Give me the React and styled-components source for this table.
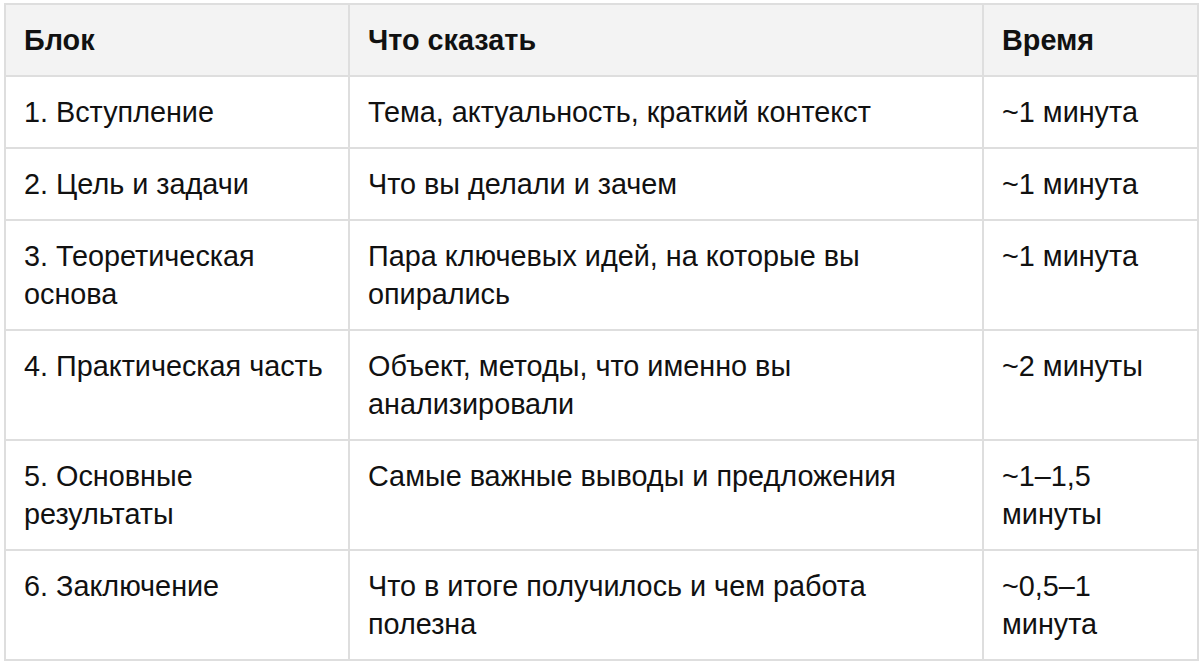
import React from 'react';
import styled, { createGlobalStyle } from 'styled-components';

const GlobalStyle = createGlobalStyle`
    body {
        margin: 0;
        background: #ffffff;
        font-family: "Liberation Sans", Arial, sans-serif;
    }
`;

const Page = styled.div`
    padding: 3px 3px 0 4px;
`;

const Table = styled.table`
    width: 1193px;
    border-collapse: collapse;
    table-layout: fixed;
    color: #111111;
    font-size: 28.8px;
    line-height: 38px;
`;

const Th = styled.th`
    background: #f3f3f3;
    border: 2px solid #dedede;
    padding: 16px 18px;
    text-align: left;
    vertical-align: top;
    font-weight: 700;
`;

const Td = styled.td`
    border: 2px solid #dedede;
    padding: 16px 18px;
    vertical-align: top;
    font-weight: 400;
`;

const rows = [
    ['1. Вступление', 'Тема, актуальность, краткий контекст', '~1 минута'],
    ['2. Цель и задачи', 'Что вы делали и зачем', '~1 минута'],
    ['3. Теоретическая основа', 'Пара ключевых идей, на которые вы опирались', '~1 минута'],
    ['4. Практическая часть', 'Объект, методы, что именно вы анализировали', '~2 минуты'],
    ['5. Основные результаты', 'Самые важные выводы и предложения', '~1–1,5 минуты'],
    ['6. Заключение', 'Что в итоге получилось и чем работа полезна', '~0,5–1 минута'],
];

function App() {
    return (
        <Page>
            <GlobalStyle />
            <Table>
                <colgroup>
                    <col style={{ width: 344 }} />
                    <col style={{ width: 634 }} />
                    <col style={{ width: 215 }} />
                </colgroup>
                <thead>
                    <tr>
                        <Th>Блок</Th>
                        <Th>Что сказать</Th>
                        <Th>Время</Th>
                    </tr>
                </thead>
                <tbody>
                    {rows.map((r) => (
                        <tr key={r[0]}>
                            <Td>{r[0]}</Td>
                            <Td>{r[1]}</Td>
                            <Td>{r[2]}</Td>
                        </tr>
                    ))}
                </tbody>
            </Table>
        </Page>
    );
}

export default App;
